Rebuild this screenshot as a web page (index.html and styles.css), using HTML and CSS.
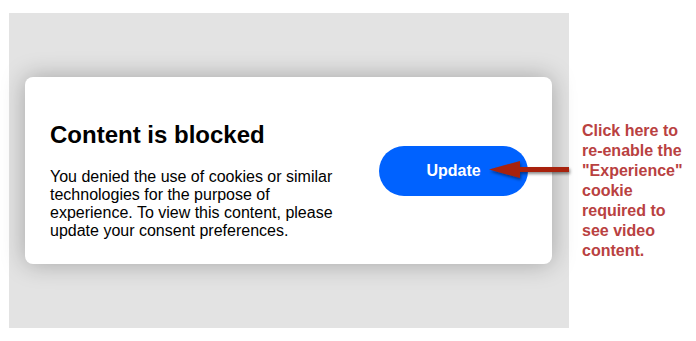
FILE: index.html
```html
<!DOCTYPE html>
<html>
<head>
<meta charset="utf-8">
<link rel="stylesheet" href="styles.css">
</head>
<body>
<div class="page">
  <div class="panel">
    <div class="card">
      <div class="card-text">
        <h2 class="title">Content is blocked</h2>
        <p class="desc">You denied the use of cookies or similar technologies for the purpose of experience. To view this content, please update your consent preferences.</p>
      </div>
      <button class="update-btn">Update</button>
    </div>
  </div>
  <div class="note">Click here to re-enable the "Experience" cookie required to see video content.</div>
  <svg class="arrow" width="90" height="30" viewBox="0 0 90 30">
    <defs>
      <filter id="sh" x="-20%" y="-50%" width="140%" height="200%">
        <feDropShadow dx="1" dy="2" stdDeviation="1.5" flood-color="#000" flood-opacity="0.45"/>
      </filter>
    </defs>
    <g filter="url(#sh)">
      <rect x="28" y="12" width="52" height="5" fill="#a8230a"/>
      <polygon points="0,14.5 31,6 31,23" fill="#a8230a"/>
    </g>
  </svg>
</div>
</body>
</html>
```
FILE: styles.css
```css
html, body {
  margin: 0;
  padding: 0;
  background: #ffffff;
}
.page {
  position: relative;
  display: flex;
  align-items: flex-start;
  font-family: "Liberation Sans", Arial, sans-serif;
  padding: 13px 0 0 9px;
}
.panel {
  width: 560px;
  height: 315px;
  box-sizing: border-box;
  background: #e3e3e3;
  padding: 64px 17px 0 16px;
}
.card {
  height: 187px;
  box-sizing: border-box;
  background: #fff;
  border-radius: 8px;
  box-shadow: 0 0 24px rgba(0, 0, 0, 0.28);
  display: flex;
  align-items: flex-start;
  padding: 44px 24px 0 25px;
}
.card-text {
  width: 300px;
}
.title {
  margin: 0 0 19px;
  font-size: 24px;
  line-height: 28px;
  font-weight: bold;
  color: #000;
}
.desc {
  margin: 0;
  font-size: 16px;
  line-height: 18px;
  color: #000;
}
.update-btn {
  margin: 25px 0 0 auto;
  width: 149px;
  height: 50px;
  border: none;
  border-radius: 25px;
  background: #0062ff;
  color: #fff;
  font-family: "Liberation Sans", Arial, sans-serif;
  font-weight: bold;
  font-size: 16px;
  padding: 0;
}
.note {
  margin: 108px 0 0 13px;
  width: 110px;
  font-size: 16px;
  line-height: 20px;
  font-weight: bold;
  color: #b94141;
}
.arrow {
  position: absolute;
  left: 489px;
  top: 155px;
}
```
